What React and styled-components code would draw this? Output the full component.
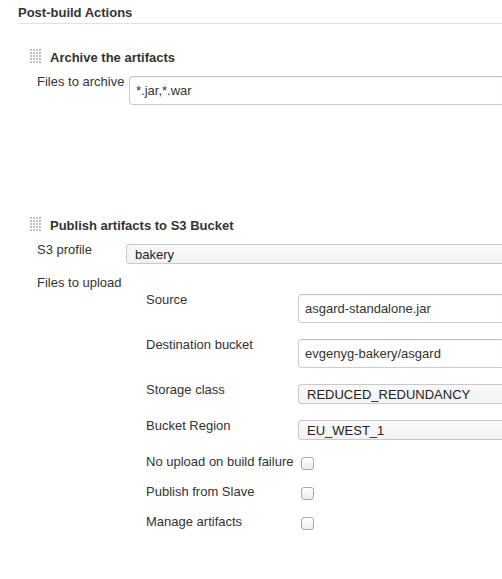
import React from 'react'
import styled, { createGlobalStyle } from 'styled-components'

const GlobalStyle = createGlobalStyle`
    html, body {
        margin: 0;
        padding: 0;
        background: #fff;
        overflow: hidden;
    }
    body {
        font-family: "Liberation Sans", Arial, sans-serif;
        font-size: 13px;
        color: #333;
    }
`

const Page = styled.div`
    padding-left: 18px;
`

const SectionHeader = styled.div`
    font-weight: bold;
    line-height: 16px;
    padding: 5px 0 2px;
    border-bottom: 1px solid #e2e2e2;
`

const Block = styled.div`
    margin-left: 12px;
    margin-top: ${p => p.$top}px;
`

const BlockTitle = styled.div`
    display: flex;
    align-items: flex-start;
    gap: 9px;
    height: 16px;
    font-weight: bold;
    line-height: 16px;

    svg {
        margin-top: 0;
    }
    span {
        padding-top: 1px;
    }
`

const Row = styled.div`
    display: flex;
    align-items: flex-start;
    margin-top: ${p => p.$top}px;
    padding-left: ${p => (p.$nested ? 0 : 7)}px;
`

const Label = styled.div`
    flex: 0 0 ${p => p.$width}px;
    padding-top: 1px;
    line-height: 16px;
    white-space: nowrap;
`

const TextBox = styled.input`
    flex: 1;
    min-width: 0;
    box-sizing: border-box;
    height: 29px;
    margin: 3px 0 0;
    padding: 0 6px;
    border: 1px solid #ccc;
    border-right: none;
    border-top-color: #c2c2c2;
    border-radius: 4px 0 0 4px;
    box-shadow: inset 0 1px 1px rgba(0, 0, 0, 0.05);
    font: 13px "Liberation Sans", Arial, sans-serif;
    color: #333;
    background: #fff;
    outline: none;
`

const SelectBox = styled.select`
    flex: 1;
    min-width: 0;
    box-sizing: border-box;
    height: 20px;
    margin: 3px 0 0;
    padding: 0 8px;
    border: 1px solid #c9c9c9;
    border-right: none;
    border-radius: 4px 0 0 4px;
    appearance: none;
    background: linear-gradient(#fafafa, #f2f2f2);
    font: 13px "Liberation Sans", Arial, sans-serif;
    color: #222;
    outline: none;
`

const Nested = styled.div`
    margin-left: 116px;
`

const CheckRow = styled.div`
    display: flex;
    align-items: flex-start;
    margin-top: 13px;
`

const Check = styled.input`
    appearance: none;
    width: 13px;
    height: 13px;
    margin: 4px 0 0 3px;
    box-sizing: border-box;
    border: 1px solid #a9a9a9;
    border-radius: 3px;
    background: linear-gradient(#ffffff, #ececec);
`

const Grip = () => {
    const dots = []
    for (let r = 0; r < 5; r++) {
        for (let c = 0; c < 4; c++) {
            dots.push(<rect key={r + '-' + c} x={c * 3} y={r * 3} width="2" height="2" fill="#c4c4c4" />)
        }
    }
    return (
        <svg width="11" height="14" viewBox="0 0 11 14">
            {dots}
        </svg>
    )
}

const nestedFields = [
    { label: 'Source', kind: 'text', value: 'asgard-standalone.jar' },
    { label: 'Destination bucket', kind: 'text', value: 'evgenyg-bakery/asgard' },
    { label: 'Storage class', kind: 'select', value: 'REDUCED_REDUNDANCY' },
    { label: 'Bucket Region', kind: 'select', value: 'EU_WEST_1' },
]

const checks = ['No upload on build failure', 'Publish from Slave', 'Manage artifacts']

const App = () => {
    return (
        <Page>
            <GlobalStyle />
            <SectionHeader>Post-build Actions</SectionHeader>

            <Block $top={25}>
                <BlockTitle>
                    <Grip />
                    <span>Archive the artifacts</span>
                </BlockTitle>
                <Row $top={8}>
                    <Label $width={92}>Files to archive</Label>
                    <TextBox defaultValue="*.jar,*.war" />
                </Row>
            </Block>

            <Block $top={112}>
                <BlockTitle>
                    <Grip />
                    <span>Publish artifacts to S3 Bucket</span>
                </BlockTitle>
                <Row $top={8}>
                    <Label $width={89}>S3 profile</Label>
                    <SelectBox defaultValue="bakery">
                        <option>bakery</option>
                    </SelectBox>
                </Row>
                <Row $top={10}>
                    <Label $width={89}>Files to upload</Label>
                </Row>
                <Nested>
                    {nestedFields.map((f, i) => (
                        <Row key={f.label} $nested $top={i === 0 ? 0 : 13}>
                            <Label $width={152}>{f.label}</Label>
                            {f.kind === 'text' ? (
                                <TextBox defaultValue={f.value} />
                            ) : (
                                <SelectBox defaultValue={f.value}>
                                    <option>{f.value}</option>
                                </SelectBox>
                            )}
                        </Row>
                    ))}
                    {checks.map(c => (
                        <CheckRow key={c}>
                            <Label $width={152}>{c}</Label>
                            <Check type="checkbox" />
                        </CheckRow>
                    ))}
                </Nested>
            </Block>
        </Page>
    )
}

export default App
